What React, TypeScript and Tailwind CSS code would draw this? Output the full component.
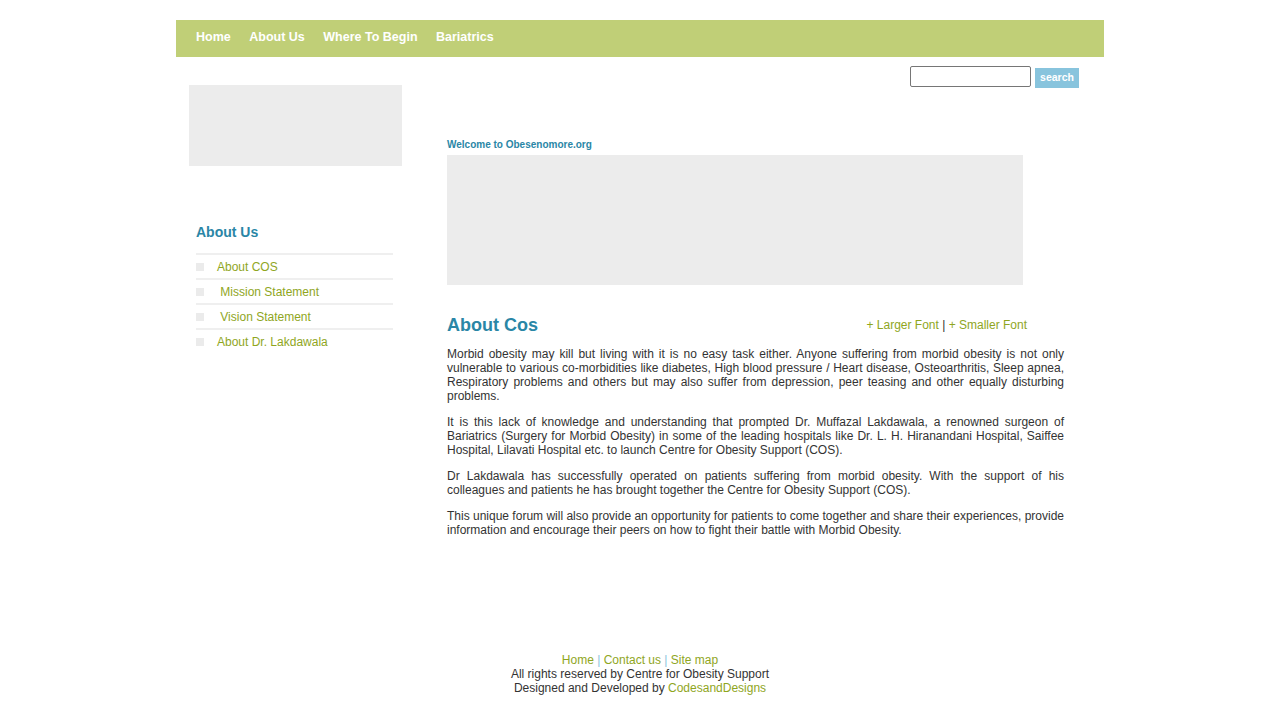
export default function App() {
  const navItems = ["Home", "About Us", "Where To Begin", "Bariatrics"];
  const sideItems = [
    "About COS",
    "\u00a0Mission Statement",
    "\u00a0Vision Statement",
    "About Dr. Lakdawala",
  ];
  const narrow = { fontFamily: '"Liberation Sans Narrow", "Liberation Sans", Arial, sans-serif' };

  return (
    <div className="min-h-screen bg-white pt-5 font-['Liberation_Sans',Arial,sans-serif] text-[12px] text-[#333]">
      <div className="mx-auto w-[928px]">
        {/* Top navigation */}
        <nav className="flex h-[37px] items-center gap-[18.5px] bg-[#c0cf77] pb-[2px] pl-5">
          {navItems.map((item) => (
            <a key={item} href="#" className="text-[12.5px] font-bold text-white">
              {item}
            </a>
          ))}
        </nav>

        <div className="flex">
          {/* Left column */}
          <aside className="w-[271px] shrink-0 pt-7">
            <div className="ml-[13px] h-[81px] w-[213px] bg-[#ececec]"></div>
            <h3 className="ml-5 mt-[58px] text-[14px] leading-4 font-bold text-[#2a86a6]">About Us</h3>
            <ul className="ml-5 mt-[13px] w-[197px]">
              {sideItems.map((item) => (
                <li key={item} className="flex h-[25px] items-center border-t-2 border-[#efefef] pt-[1px]">
                  <span className="h-2 w-2 bg-[#ebebeb]"></span>
                  <a href="#" className="ml-[13px] text-[#8fa61e]">
                    {item}
                  </a>
                </li>
              ))}
            </ul>
          </aside>

          {/* Main column */}
          <main className="flex-1 pr-10">
            <div className="-mr-[15px] mt-[9px] flex items-start justify-end gap-1">
              <input className="h-[21px] w-[121px] border border-[#767676] rounded-[2px]" />
              <button className="mt-[2px] h-5 w-[44px] bg-[#88c4dd] text-[10.5px] font-bold text-white">
                search
              </button>
            </div>
            <p className="mt-[50px] text-[10px] leading-[14px] font-bold text-[#2a86a6]">Welcome to Obesenomore.org</p>
            <div className="mt-[3px] h-[130px] w-[576px] bg-[#ececec]"></div>

            <div className="mt-[30px] flex w-[580px] items-center justify-between">
              <h1 className="text-[18px] leading-5 font-bold text-[#2a86a6]">About Cos</h1>
              <div className="text-[12px]">
                <a href="#" className="text-[#8fa61e]">+ Larger Font</a>
                <span> | </span>
                <a href="#" className="text-[#8fa61e]">+ Smaller Font</a>
              </div>
            </div>

            <div className="mt-[12px] space-y-3 text-justify text-[12px] leading-[14px] text-[#333]" style={narrow}>
              <p>
                Morbid obesity may kill but living with it is no easy task either. Anyone suffering from morbid
                obesity is not only vulnerable to various co-morbidities like diabetes, High blood pressure / Heart
                disease, Osteoarthritis, Sleep apnea, Respiratory problems and others but may also suffer from
                depression, peer teasing and other equally disturbing problems.
              </p>
              <p>
                It is this lack of knowledge and understanding that prompted Dr. Muffazal Lakdawala, a renowned
                surgeon of Bariatrics (Surgery for Morbid Obesity) in some of the leading hospitals like Dr. L. H.
                Hiranandani Hospital, Saiffee Hospital, Lilavati Hospital etc. to launch Centre for Obesity Support
                (COS).
              </p>
              <p>
                Dr Lakdawala has successfully operated on patients suffering from morbid obesity. With the support
                of his colleagues and patients he has brought together the Centre for Obesity Support (COS).
              </p>
              <p>
                This unique forum will also provide an opportunity for patients to come together and share their
                experiences, provide information and encourage their peers on how to fight their battle with Morbid
                Obesity.
              </p>
            </div>
          </main>
        </div>

        {/* Footer */}
        <footer className="mt-[116px] pb-6 text-center text-[12px] leading-[14px] text-[#333]">
          <p>
            <a href="#" className="text-[#8fa61e]">Home</a>
            <span className="text-[#88c4dd]"> | </span>
            <a href="#" className="text-[#8fa61e]">Contact us</a>
            <span className="text-[#88c4dd]"> | </span>
            <a href="#" className="text-[#8fa61e]">Site map</a>
          </p>
          <p>All rights reserved by Centre for Obesity Support</p>
          <p>
            Designed and Developed by <a href="#" className="text-[#8fa61e]">CodesandDesigns</a>
          </p>
        </footer>
      </div>
    </div>
  );
}
